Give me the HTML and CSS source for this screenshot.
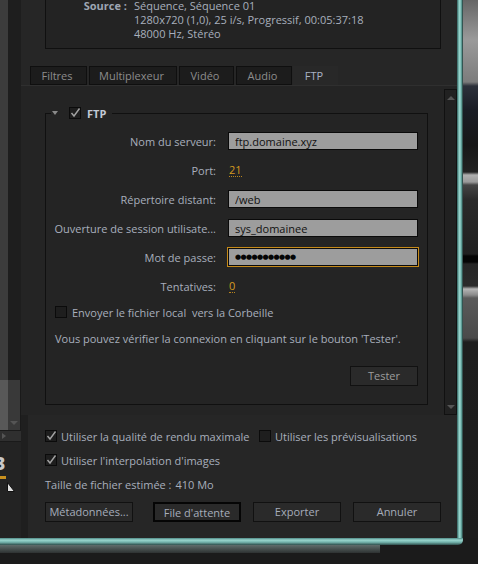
FILE: index.html
```html
<!DOCTYPE html>
<html>
  <head>
    <meta charset="utf-8">
    <title>Paramètres d'exportation - FTP</title>
    <link rel="stylesheet" href="styles.css">
  </head>

  <body>
    <div class="screen">
      <div class="stage">

        <!-- what is left of the window behind, on the left -->
        <div class="left-edge">
          <div class="le-top"><div class="le-gray"></div><div class="le-dark"></div></div>
          <div class="le-scroll"><div class="le-light"></div><div class="le-track"><span class="arrow-down"></span></div></div>
          <div class="le-hbar"><span class="arrow-right"></span></div>
          <div class="le-panel">
            <div class="le-digit">3</div>
            <div class="le-meter"></div>
            <svg class="le-cursor" width="8" height="10" viewBox="0 0 8 10">
              <polygon points="0.5,0.5 7.5,9.5 0.5,9.5" fill="#e0e0e0" stroke="#111" stroke-width="1"/>
            </svg>
          </div>
        </div>

        <div class="dialog">
          <div class="source">
            <span class="source-key">Source :</span>
            <span>Séquence, Séquence 01</span>
            <span></span>
            <span>1280x720 (1,0), 25 i/s, Progressif, 00:05:37:18</span>
            <span></span>
            <span>48000 Hz, Stéréo</span>
          </div>

          <div class="tabs">
            <div class="tab tab-filtres">Filtres</div>
            <div class="tab tab-mux">Multiplexeur</div>
            <div class="tab tab-video">Vidéo</div>
            <div class="tab tab-audio">Audio</div>
            <div class="tab tab-ftp active">FTP</div>
          </div>

          <div class="tab-panel">
            <div class="tab-scroll">
              <fieldset class="group">
                <legend>
                  <span class="legend-row">
                    <span class="disclose"></span>
                    <span class="box"><svg viewBox="0 0 12 12"><path d="M2.5 6 L5 9 L10.5 1.5"/></svg></span>
                    <b class="legend-title">FTP</b>
                  </span>
                </legend>

                <div class="fields">
                  <label class="field-label">Nom du serveur:</label>
                  <input class="field" type="text" value="ftp.domaine.xyz">

                  <label class="field-label">Port:</label>
                  <span class="num">21</span>

                  <label class="field-label">Répertoire distant:</label>
                  <input class="field" type="text" value="/web">

                  <label class="field-label">Ouverture de session utilisate...</label>
                  <input class="field" type="text" value="sys_domainee">

                  <label class="field-label">Mot de passe:</label>
                  <input class="field focus" type="text" value="●●●●●●●●●●●">

                  <label class="field-label">Tentatives:</label>
                  <span class="num">0</span>
                </div>

                <div class="check-row">
                  <span class="box"></span>
                  <span>Envoyer le fichier local&nbsp; vers la Corbeille</span>
                </div>

                <p class="hint">Vous pouvez vérifier la connexion en cliquant sur le bouton 'Tester'.</p>

                <div class="group-actions">
                  <button class="btn small">Tester</button>
                </div>
              </fieldset>
            </div>

            <div class="scrollbar">
              <span class="arrow-up"></span>
              <span class="arrow-down"></span>
            </div>
          </div>

          <div class="bottom">
            <div class="opt-row">
              <div class="check wide">
                <span class="box"><svg viewBox="0 0 12 12"><path d="M2.5 6 L5 9 L10.5 1.5"/></svg></span>
                <span>Utiliser la qualité de rendu maximale</span>
              </div>
              <div class="check">
                <span class="box"></span>
                <span>Utiliser les prévisualisations</span>
              </div>
            </div>
            <div class="opt-row">
              <div class="check">
                <span class="box"><svg viewBox="0 0 12 12"><path d="M2.5 6 L5 9 L10.5 1.5"/></svg></span>
                <span>Utiliser l'interpolation d'images</span>
              </div>
            </div>
            <div class="opt-row">Taille de fichier estimée : <span class="size">410 Mo</span></div>

            <div class="actions">
              <button class="btn">Métadonnées...</button>
              <button class="btn default">File d'attente</button>
              <button class="btn">Exporter</button>
              <button class="btn">Annuler</button>
            </div>
          </div>
        </div>

        <div class="teal-side"></div>
        <div class="right-edge"></div>
      </div>

      <div class="teal-bottom"></div>
      <div class="under"><div class="under-glow"></div></div>
    </div>
  </body>
</html>
```

FILE: styles.css
```css
* {
  box-sizing: border-box;
}

body {
  margin: 0;
  width: 478px;
  height: 564px;
  overflow: hidden;
  background-color: #1b1b1b;
  font-family: "Open Sans", "Noto Sans", sans-serif;
  font-size: 11px;
  color: #a8afbc; /* label text */
}

.stage {
  display: flex;
  height: 538px;
}

/* ----------------------------------- Left edge (window behind) */
.left-edge {
  width: 21px;
  display: flex;
  flex-direction: column;
}

.le-top {
  flex: 1;
  display: flex;
}

.le-gray {
  width: 8px;
  background-color: #3c3c3c;
}

.le-dark {
  flex: 1;
  background-color: #1e1e1e;
}

.le-scroll {
  height: 50px;
  display: flex;
}

.le-light {
  width: 8px;
  background-color: #585858;
}

.le-track {
  flex: 1;
  background-color: #393939;
  border-right: 1px solid #1a1a1a;
  display: flex;
  align-items: flex-end;
  justify-content: center;
  padding-bottom: 5px;
}

.le-hbar {
  height: 12px;
  background-color: #2f2f2f;
  border-top: 1px solid #1a1a1a;
  border-bottom: 1px solid #1a1a1a;
  display: flex;
  align-items: center;
  padding-left: 2px;
}

.le-panel {
  height: 96px;
  background-color: #232323;
  overflow: hidden;
  padding-top: 14px;
}

.le-digit {
  margin-left: -6px;
  font-family: "DejaVu Sans", sans-serif;
  font-weight: bold;
  font-size: 17px;
  line-height: 16px;
  color: #c9c9c9;
}

.le-meter {
  width: 6px;
  height: 3px;
  margin-top: 4px;
  background-color: #c8901e;
}

.le-cursor {
  display: block;
  margin: 3px 0 0 7px;
}
/* ----------------------------------- */

/* ----------------------------------- Dialog */
.dialog {
  width: 436px;
  background-color: #262626;
  display: flex;
  flex-direction: column;
}

.source {
  margin: -2px 16px 0 24px;
  border: 1px solid #101010;
  background-color: #232323;
  padding: 0 0 7px 0;
  display: grid;
  grid-template-columns: 81px 1fr;
  column-gap: 7px;
  line-height: 14px;
  white-space: nowrap;
}

.source-key {
  text-align: right;
  font-weight: bold;
  color: #9ea6b3;
}

/* ----------------------------------- Tabs */
.tabs {
  display: flex;
  gap: 2px;
  height: 19px;
  margin-top: 17px;
  padding-left: 9px;
}

.tab {
  height: 19px;
  padding: 0 3px 0 0;
  line-height: 17px;
  text-align: center;
  background-color: #1c1c1c;
  border: 1px solid #0f0f0f;
  color: #8c8c8c;
}

.tab-filtres { width: 57px; }
.tab-mux { width: 88px; }
.tab-video { width: 55px; }
.tab-audio { width: 56px; }
.tab-ftp { width: 45px; }

.tab.active {
  margin-left: -1px;
  background-color: #282828;
  border-color: #282828;
  color: #a9b3c5;
}

.tab-panel {
  height: 330px;
  display: flex;
  background-color: #242424;
  border-top: 1px solid #2f2f2f;
}

.tab-scroll {
  flex: 1;
  padding: 20px 0 0 24px;
}

.scrollbar {
  width: 13px;
  margin-top: 3px;
  border: 1px solid #111;
  background-color: #212121;
  display: flex;
  flex-direction: column;
  justify-content: space-between;
  align-items: center;
  padding: 6px 0 5px;
}

.arrow-up {
  width: 0;
  height: 0;
  border-left: 4px solid transparent;
  border-right: 4px solid transparent;
  border-bottom: 4px solid #555;
}

.arrow-down {
  width: 0;
  height: 0;
  border-left: 4px solid transparent;
  border-right: 4px solid transparent;
  border-top: 4px solid #555;
}

.arrow-right {
  width: 0;
  height: 0;
  border-top: 3px solid transparent;
  border-bottom: 3px solid transparent;
  border-left: 4px solid #555;
}

/* ----------------------------------- FTP group */
.group {
  margin: 0;
  width: 383px;
  height: 299px;
  border: 1px solid #101010;
  padding: 0 9px 0 0;
}

.group legend {
  margin-left: 5px;
  padding: 0 6px 0 1px;
}

.legend-row {
  display: flex;
  align-items: center;
  height: 14px;
}

.disclose {
  width: 0;
  height: 0;
  border-left: 3px solid transparent;
  border-right: 3px solid transparent;
  border-top: 4px solid #8a8a8a;
  margin-right: 11px;
}

.legend-title {
  margin-left: 6px;
  color: #c2c9d6;
}

.box {
  width: 12px;
  height: 12px;
  flex: none;
  border: 1px solid #0b0b0b;
  background-color: #1e1e1e;
}

.box svg {
  display: block;
  width: 12px;
  height: 12px;
  margin: -1px;
  overflow: visible;
  fill: none;
  stroke: #a2a2a2;
  stroke-width: 1.4;
}

.fields {
  display: grid;
  grid-template-columns: 170px 190px;
  grid-auto-rows: 18px;
  column-gap: 12px;
  row-gap: 11px;
  align-items: center;
  margin-top: 12px;
}

.field-label {
  text-align: right;
  white-space: nowrap;
}

.field {
  width: 190px;
  height: 18px;
  margin: 0;
  padding: 0 6px;
  border: 1px solid #0a0a0a;
  background-color: #9d9d9d;
  color: #111;
  font-family: inherit;
  font-size: 11px;
  outline: none;
}

.field.focus {
  box-shadow: 0 0 0 1px #c58a1a;
  font-family: "DejaVu Sans", sans-serif;
  font-size: 7px;
  letter-spacing: -0.6px;
  color: #050505;
}

.num {
  justify-self: start;
  margin-left: 1px;
  line-height: 13px;
  color: #d49a20;
  border-bottom: 1px dotted #b8841c;
}

.check-row {
  display: flex;
  align-items: center;
  gap: 5px;
  height: 14px;
  margin-top: 10px;
  padding-left: 9px;
}

.hint {
  margin: 13px 0 0 9px;
  line-height: 14px;
}

.group-actions {
  display: flex;
  justify-content: flex-end;
  margin-top: 20px;
}

/* ----------------------------------- Buttons */
.btn {
  width: 88px;
  height: 20px;
  padding: 0;
  background-color: #2a2a2a;
  border: 1px solid #111;
  color: #a6adba;
  font-family: inherit;
  font-size: 11px;
  line-height: 18px;
}

.btn.small {
  width: 68px;
  color: #9d9d9d;
}

.btn.default {
  border: 2px solid #050505;
  margin-left: 20px;
}

.btn + .btn:not(.default) {
  margin-left: 12px;
}

/* ----------------------------------- Bottom options */
.bottom {
  flex: 1;
  padding: 14px 0 0 17px;
  border-left: 7px solid #1f1f1f;
}

.opt-row {
  display: flex;
  align-items: center;
  height: 14px;
  white-space: nowrap;
}

.opt-row + .opt-row {
  margin-top: 10px;
}

.check {
  display: flex;
  align-items: center;
  gap: 4px;
}

.check.wide {
  width: 214px;
}

.size {
  margin-left: 4px;
}

.actions {
  display: flex;
  margin-top: 11px;
}
/* ----------------------------------- */

/* ----------------------------------- Window frame and surroundings */
.teal-side {
  width: 6px;
  background: linear-gradient(to right, #2f5e5b, #8fcfc7 35%, #9ad8d0 50%, #5d9c96 75%, #20302f);
}

.right-edge {
  flex: 1;
  background: linear-gradient(to bottom,
    #666 0px, #9a9a9a 40px, #7c7c7c 82px, #2c303a 86px, #1a1d25 110px,
    #171717 145px, #222 172px, #b0b0b0 175px, #9a9a9a 182px, #454545 185px,
    #2a2a2a 200px, #202020 254px, #050505 256px, #050505 262px, #262626 264px,
    #2a2a2a 286px, #b5b5b5 289px, #8a8a8a 295px, #5a5a5a 298px, #4a4a4a 338px,
    #1e1e1e 342px, #1c1c1c 538px);
}

.teal-bottom {
  width: 463px;
  height: 7px;
  border-bottom-right-radius: 5px;
  background: linear-gradient(to bottom, #4f8a86, #9ad6ce 30%, #74b4ad 60%, #2f4e4c);
}

.under {
  height: 19px;
}

.under-glow {
  width: 380px;
  height: 8px;
  background: linear-gradient(to bottom, #5f6c6b, #2e3232);
}
```
